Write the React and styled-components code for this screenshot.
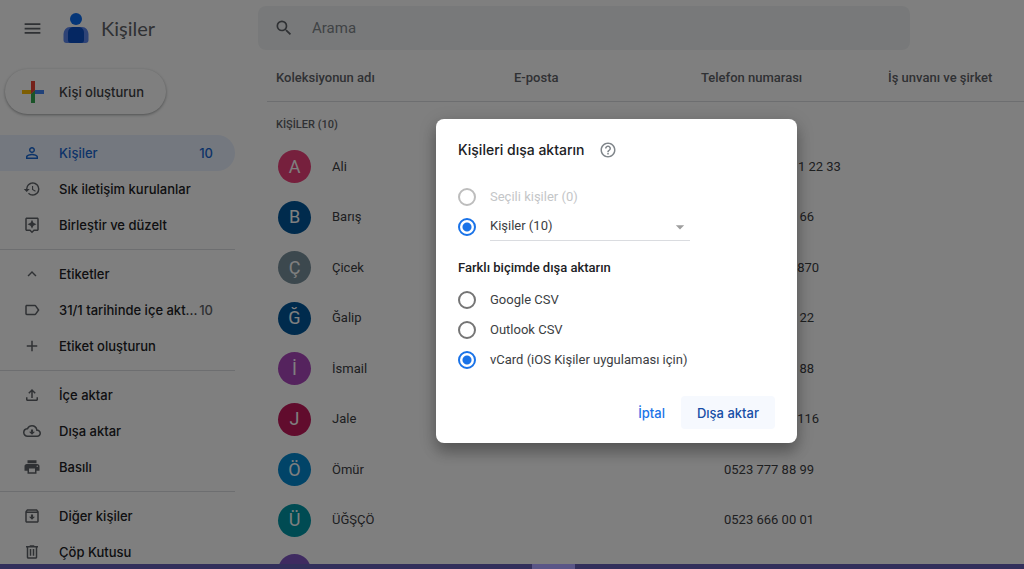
import { useState } from 'react';
import styled, { createGlobalStyle } from 'styled-components';
import {
    MdAdd,
    MdArrowDropDown,
    MdExpandLess,
    MdHelpOutline,
    MdHistory,
    MdLabelOutline,
    MdMenu,
    MdOutlineArchive,
    MdOutlineAssistant,
    MdOutlineCloudDownload,
    MdPersonOutline,
    MdPrint,
    MdSearch,
} from 'react-icons/md';

const contacts = [
    { name: 'Ali', phone: '+90 (523) 111 22 33', color: '#ec407a' },
    { name: 'Barış', phone: '0523 222 44 66', color: '#01579b' },
    { name: 'Çicek', phone: '+905236514870', color: '#78909c' },
    { name: 'Ğalip', phone: '0523 333 11 22', color: '#01579b' },
    { name: 'İsmail', phone: '0523 444 66 88', color: '#ab47bc' },
    { name: 'Jale', phone: '+905234125116', color: '#c2185b' },
    { name: 'Ömür', phone: '0523 777 88 99', color: '#0288d1' },
    { name: 'ÜĞŞÇÖ', phone: '0523 666 00 01', color: '#0097a7' },
    { name: 'Veli', phone: '0523 555 00 02', color: '#7e57c2' },
];

const UploadIcon = () => (
    <svg width="18" height="18" viewBox="0 0 24 24" fill="currentColor">
        <path d="M4 15h2v3h12v-3h2v3c0 1.100-.9 2-2 2H6c-1.100 0-2-.9-2-2v-3zM7 9l1.410 1.410L11 7.830V16h2V7.830l2.590 2.580L17 9l-5-5-5 5z" />
    </svg>
);

const TrashIcon = () => (
    <svg width="18" height="18" viewBox="0 0 24 24" fill="currentColor">
        <path d="M15 4V3H9v1H4v2h1v13c0 1.100.9 2 2 2h10c1.100 0 2-.9 2-2V6h1V4h-5zm2 15H7V6h10v13zM9 8h2v9H9V8zm4 0h2v9h-2V8z" />
    </svg>
);

const Logo = () => (
    <svg width="26" height="32" viewBox="0 0 26 32">
        <circle cx="13" cy="7" r="6" fill="#0a6cf0" />
        <path
            d="M7 15h12c4 0 6 3 6.500 7v6c0 2-1 3-3 3h-19c-2 0-3-1-3-3v-6C1 18 3 15 7 15z"
            fill="#5c86ec"
        />
        <path
            d="M11 15h4c4 0 6 2.500 6 6v7c0 2-1 3-3 3H8c-2 0-3-1-3-3v-7c0-3.500 2-6 6-6z"
            fill="#0a4fc4"
        />
    </svg>
);

const PlusLogo = () => (
    <svg width="22" height="22" viewBox="0 0 22 22">
        <path d="M9 0h4v9l-4 4z" fill="#ea4335" />
        <path d="M0 9h9v4H0z" fill="#fbbc04" />
        <path d="M9 13l4-4v13H9z" fill="#34a853" />
        <path d="M13 9h9v4h-9z" fill="#4285f4" />
        <path d="M9 9h4l-4 4z" fill="#ea4335" />
    </svg>
);

const menu = [
    [
        { icon: <MdPersonOutline />, label: 'Kişiler', count: 10, active: true },
        { icon: <MdHistory />, label: 'Sık iletişim kurulanlar' },
        { icon: <MdOutlineAssistant />, label: 'Birleştir ve düzelt' },
    ],
    [
        { icon: <MdExpandLess />, label: 'Etiketler' },
        { icon: <MdLabelOutline />, label: '31/1 tarihinde içe akt...', count: 10 },
        { icon: <MdAdd />, label: 'Etiket oluşturun' },
    ],
    [
        { icon: <UploadIcon />, label: 'İçe aktar' },
        { icon: <MdOutlineCloudDownload />, label: 'Dışa aktar' },
        { icon: <MdPrint />, label: 'Basılı' },
    ],
    [
        { icon: <MdOutlineArchive />, label: 'Diğer kişiler' },
        { icon: <TrashIcon />, label: 'Çöp Kutusu' },
    ],
];

const formats = [
    { id: 'google', label: 'Google CSV' },
    { id: 'outlook', label: 'Outlook CSV' },
    { id: 'vcard', label: 'vCard (iOS Kişiler uygulaması için)' },
];

const Sidebar = () => (
    <Nav>
        {menu.map((group, i) => (
            <MenuGroup key={i}>
                {group.map((item) => (
                    <li key={item.label}>
                        <MenuLink href="#" $active={item.active}>
                            {item.icon}
                            <span className="label">{item.label}</span>
                            {item.count && <span className="count">{item.count}</span>}
                        </MenuLink>
                    </li>
                ))}
            </MenuGroup>
        ))}
    </Nav>
);

const ContactTable = () => (
    <Table>
        <thead>
            <tr>
                <th className="name">Koleksiyonun adı</th>
                <th className="detail">E-posta</th>
                <th className="detail">Telefon numarası</th>
                <th>İş unvanı ve şirket</th>
            </tr>
        </thead>
        <tbody>
            <tr className="section">
                <td colSpan="4">KİŞİLER (10)</td>
            </tr>
            {contacts.map((contact) => (
                <tr key={contact.name}>
                    <td>
                        <Person>
                            <Avatar $color={contact.color}>{contact.name[0]}</Avatar>
                            {contact.name}
                        </Person>
                    </td>
                    <td />
                    <td className="phone">{contact.phone}</td>
                    <td />
                </tr>
            ))}
        </tbody>
    </Table>
);

const ExportDialog = () => {
    const [source, setSource] = useState('contacts');
    const [format, setFormat] = useState('vcard');

    return (
        <Dialog role="dialog" aria-labelledby="export-title">
            <DialogTitle>
                <h2 id="export-title">Kişileri dışa aktarın</h2>
                <MdHelpOutline />
            </DialogTitle>
            <Options>
                <Option $disabled>
                    <Radio name="source" disabled />
                    <span>Seçili kişiler (0)</span>
                </Option>
                <SelectRow>
                    <Radio
                        name="source"
                        aria-label="Kişiler"
                        checked={source === 'contacts'}
                        onChange={() => setSource('contacts')}
                    />
                    <SelectBox>
                        <select aria-label="Kişiler">
                            <option>Kişiler (10)</option>
                        </select>
                        <MdArrowDropDown />
                    </SelectBox>
                </SelectRow>
            </Options>
            <h3>Farklı biçimde dışa aktarın</h3>
            <Options>
                {formats.map(({ id, label }) => (
                    <Option key={id}>
                        <Radio
                            name="format"
                            checked={format === id}
                            onChange={() => setFormat(id)}
                        />
                        <span>{label}</span>
                    </Option>
                ))}
            </Options>
            <Actions>
                <DialogButton type="button">İptal</DialogButton>
                <DialogButton type="button" $filled>
                    Dışa aktar
                </DialogButton>
            </Actions>
        </Dialog>
    );
};

const App = () => (
    <>
        <GlobalStyle />
        <Screen>
            <Page>
                <Header>
                    <Brand>
                        <IconButton type="button" aria-label="Menü">
                            <MdMenu />
                        </IconButton>
                        <Logo />
                        <h1>Kişiler</h1>
                    </Brand>
                    <Search>
                        <MdSearch />
                        <input type="search" placeholder="Arama" aria-label="Arama" />
                    </Search>
                </Header>
                <Content>
                    <aside>
                        <CreateButton type="button">
                            <PlusLogo />
                            Kişi oluşturun
                        </CreateButton>
                        <Sidebar />
                    </aside>
                    <ContactTable />
                </Content>
                <Scrim>
                    <ExportDialog />
                </Scrim>
            </Page>
            <BottomBar>
                <span />
            </BottomBar>
        </Screen>
    </>
);

export default App;

const sans = `'Inter', 'Noto Sans', sans-serif`;

const GlobalStyle = createGlobalStyle`
    * {
        box-sizing: border-box;
    }
    body {
        margin: 0;
        background: #fff;
        color: #3c4043;
        font: 13px/20px Roboto, 'Liberation Sans', sans-serif;
    }
    h1, h2, h3, ul {
        margin: 0;
        padding: 0;
    }
    button, input, select {
        font: inherit;
        color: inherit;
    }
`;

const Screen = styled.div`
    display: grid;
    grid-template-rows: minmax(0, 1fr) 5px;
    height: 100vh;
`;

const Page = styled.div`
    position: relative;
    overflow: hidden;
`;

const Header = styled.header`
    display: grid;
    grid-template-columns: 258px 1fr;
    align-items: center;
    padding: 6px 114px 0 0;
`;

const Brand = styled.div`
    display: flex;
    align-items: center;
    padding-left: 22px;
    h1 {
        margin-left: 12px;
        color: #5f6368;
        font: 400 20px/28px Lato, sans-serif;
    }
`;

const IconButton = styled.button`
    display: flex;
    margin-right: 20px;
    padding: 0;
    border: 0;
    background: none;
    color: #5f6368;
    font-size: 21px;
`;

const Search = styled.label`
    display: flex;
    align-items: center;
    gap: 16px;
    height: 44px;
    padding: 0 16px;
    border-radius: 8px;
    background: #f1f3f4;
    svg {
        font-size: 20px;
        color: #5f6368;
    }
    input {
        flex: 1;
        border: 0;
        background: none;
        font-size: 15px;
        outline: 0;
        &::placeholder {
            color: #80868b;
        }
    }
`;

const Content = styled.div`
    display: grid;
    grid-template-columns: 267px 1fr;
    align-items: start;
`;

const CreateButton = styled.button`
    display: flex;
    align-items: center;
    gap: 15px;
    height: 45px;
    margin: 19px 0 21px 5px;
    padding: 0 22px 0 17px;
    border: 0;
    border-radius: 23px;
    background: #fff;
    box-shadow: 0 1px 2px rgba(60, 64, 67, 0.3), 0 1px 3px 1px rgba(60, 64, 67, 0.15);
    font: 500 13px/20px ${sans};
`;

const Nav = styled.nav`
    width: 235px;
`;

const MenuGroup = styled.ul`
    list-style: none;
    & + & {
        margin-top: 6px;
        padding-top: 6px;
        border-top: 1px solid #dadce0;
    }
`;

const MenuLink = styled.a`
    display: flex;
    align-items: center;
    height: 36px;
    padding: 0 22px 0 23px;
    border-radius: 0 18px 18px 0;
    background: ${({ $active }) => ($active ? '#e8f0fe' : 'none')};
    color: ${({ $active }) => ($active ? '#1967d2' : '#202124')};
    font: 500 13px/20px ${sans};
    text-decoration: none;
    svg {
        flex: none;
        margin-right: 18px;
        color: ${({ $active }) => ($active ? '#1967d2' : '#5f6368')};
        font-size: 18px;
    }
    .label {
        flex: 1;
        white-space: nowrap;
    }
    .count {
        color: ${({ $active }) => ($active ? '#1967d2' : '#5f6368')};
    }
`;

const Table = styled.table`
    width: 100%;
    border-collapse: collapse;
    table-layout: fixed;
    th {
        height: 51px;
        padding: 6px 0 0;
        border-bottom: 1px solid #dadce0;
        color: #5f6368;
        font-weight: 500;
        text-align: left;
        white-space: nowrap;
    }
    .name {
        width: 247px;
        padding-left: 9px;
    }
    .detail {
        width: 187px;
    }
    td {
        height: 50px;
        padding: 0;
    }
    tr:nth-child(even) td {
        height: 51px;
    }
    .section td {
        height: 40px;
        padding: 8px 0 0 9px;
        color: #5f6368;
        font-size: 11px;
        font-weight: 500;
    }
    .phone {
        padding-left: 23px;
        white-space: nowrap;
    }
`;

const Person = styled.div`
    display: flex;
    align-items: center;
    gap: 21px;
    padding-left: 11px;
`;

const Avatar = styled.span`
    display: grid;
    place-items: center;
    width: 33px;
    height: 33px;
    border-radius: 50%;
    background: ${({ $color }) => $color};
    color: #fff;
    font-size: 18px;
`;

const Scrim = styled.div`
    position: absolute;
    inset: 0;
    display: flex;
    align-items: center;
    justify-content: center;
    padding: 0 0 2px 209px;
    background: rgba(0, 0, 0, 0.5);
`;

const Dialog = styled.section`
    width: 361px;
    padding: 21px 22px 14px;
    border-radius: 8px;
    background: #fff;
    box-shadow: 0 10px 14px rgba(0, 0, 0, 0.2), 0 4px 18px rgba(0, 0, 0, 0.2);
    h3 {
        margin: 16px 0 7px;
        color: #202124;
        font-size: 13px;
        font-weight: 500;
        line-height: 20px;
    }
`;

const DialogTitle = styled.div`
    display: flex;
    align-items: center;
    gap: 14px;
    margin-bottom: 22px;
    h2 {
        font: 500 14px/20px ${sans};
        color: #202124;
    }
    svg {
        color: #80868b;
        font-size: 18px;
    }
`;

const Options = styled.div`
    display: flex;
    flex-direction: column;
`;

const Option = styled.label`
    display: flex;
    align-items: center;
    gap: 14px;
    height: 30px;
    color: ${({ $disabled }) => ($disabled ? '#c4c6c8' : '#3c4043')};
`;

const Radio = styled.input.attrs({ type: 'radio' })`
    appearance: none;
    flex: none;
    width: 18px;
    height: 18px;
    margin: 0;
    border: 2px solid #757575;
    border-radius: 50%;
    &:checked {
        border-color: #1a73e8;
        background: radial-gradient(circle, #1a73e8 4px, transparent 5px);
    }
    &:disabled {
        border-color: #bdbdbd;
    }
`;

const SelectRow = styled.div`
    display: flex;
    align-items: center;
    gap: 14px;
    height: 30px;
`;

const SelectBox = styled.div`
    display: flex;
    align-items: center;
    width: 200px;
    height: 28px;
    border-bottom: 1px solid #dadce0;
    select {
        appearance: none;
        flex: 1;
        padding: 0 0 2px;
        border: 0;
        background: none;
        outline: 0;
    }
    svg {
        color: #9e9e9e;
        font-size: 20px;
    }
`;

const Actions = styled.div`
    display: flex;
    justify-content: flex-end;
    margin-top: 21px;
`;

const DialogButton = styled.button`
    height: 33px;
    padding: 0 16px;
    border: 0;
    border-radius: 4px;
    background: ${({ $filled }) => ($filled ? '#f6f9fe' : 'none')};
    color: ${({ $filled }) => ($filled ? '#174ea6' : '#1a73e8')};
    font: 500 13px/20px ${sans};
`;

const BottomBar = styled.footer`
    display: flex;
    background: #322f5b;
    span {
        width: 43px;
        margin-left: 52%;
        background: #5a5687;
    }
`;
